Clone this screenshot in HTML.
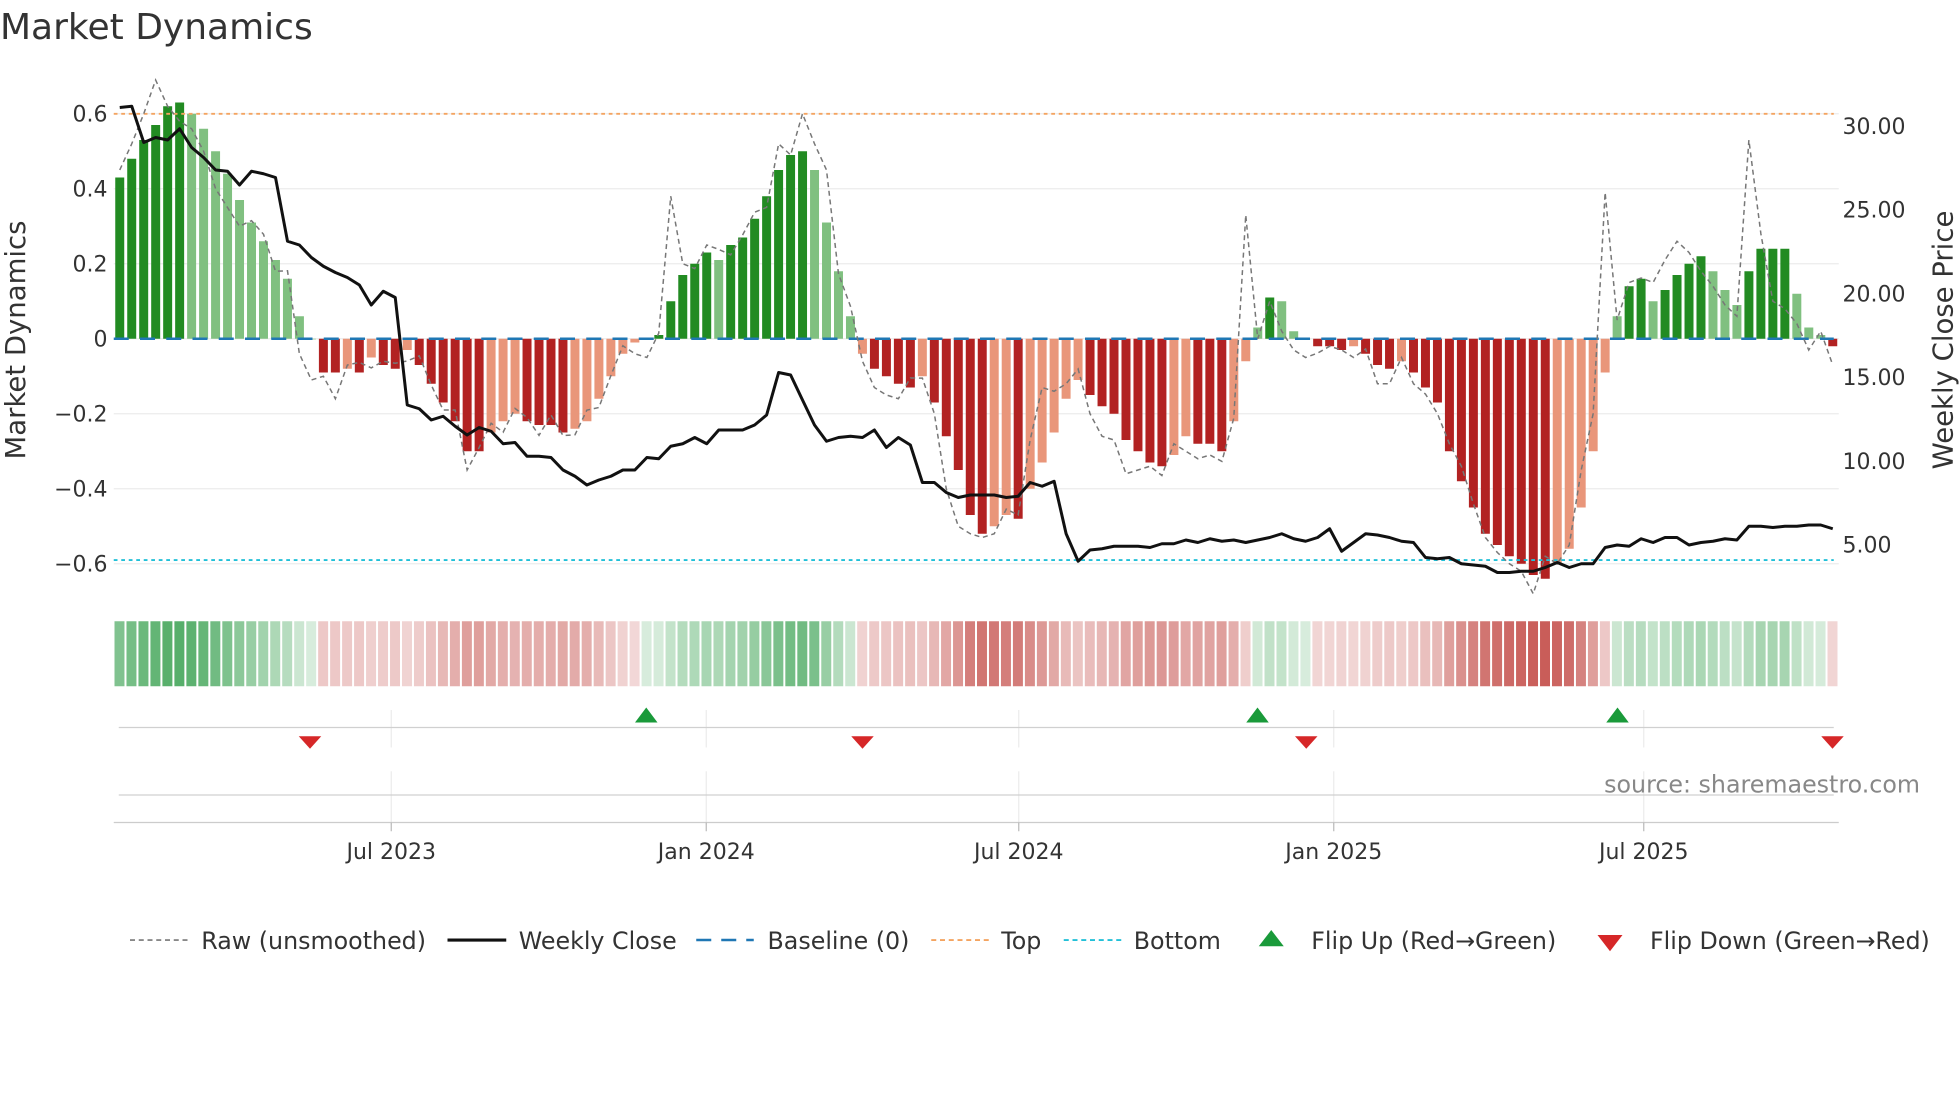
<!DOCTYPE html>
<html><head><meta charset="utf-8"><style>
html,body{margin:0;padding:0;background:#fff;}
svg{display:block;font-family:"DejaVu Sans","Liberation Sans",sans-serif;}
</style></head><body>
<svg id="s" width="1960" height="1102" viewBox="0 0 1568 881.6" xmlns="http://www.w3.org/2000/svg">
<rect width="1568" height="882" fill="#fff"/>
<text x="0" y="31" font-size="28.8" fill="#333">Market Dynamics</text>
<g id="grid" stroke="#ececec" stroke-width="1"></g>
<g id="bars"></g>
<g id="strip"></g>
<g id="lines"></g>
<g font-size="17.6" fill="#333">
<text x="86" y="97" text-anchor="end">0.6</text>
<text x="86" y="157" text-anchor="end">0.4</text>
<text x="86" y="217" text-anchor="end">0.2</text>
<text x="86" y="277" text-anchor="end">0</text>
<text x="86" y="337" text-anchor="end">−0.2</text>
<text x="86" y="397" text-anchor="end">−0.4</text>
<text x="86" y="457" text-anchor="end">−0.6</text>
<text x="1474" y="107">30.00</text>
<text x="1474" y="174">25.00</text>
<text x="1474" y="241">20.00</text>
<text x="1474" y="308">15.00</text>
<text x="1474" y="375">10.00</text>
<text x="1474" y="442">5.00</text>
<text x="313" y="687" text-anchor="middle">Jul 2023</text>
<text x="565" y="687" text-anchor="middle">Jan 2024</text>
<text x="815" y="687" text-anchor="middle">Jul 2024</text>
<text x="1067" y="687" text-anchor="middle">Jan 2025</text>
<text x="1315" y="687" text-anchor="middle">Jul 2025</text>
</g>
<text transform="translate(20,272) rotate(-90)" font-size="22" fill="#333" text-anchor="middle">Market Dynamics</text>
<text transform="translate(1562,272) rotate(-90)" font-size="22" fill="#333" text-anchor="middle">Weekly Close Price</text>
<text x="1536" y="634" font-size="19" fill="#888" text-anchor="end">source: sharemaestro.com</text>
<g font-size="19" fill="#333">
<line x1="104" y1="752" x2="150" y2="752" stroke="#777" stroke-width="1.3" stroke-dasharray="4,3"/>
<text x="161" y="759">Raw (unsmoothed)</text>
<line x1="358" y1="752" x2="405" y2="752" stroke="#111" stroke-width="2.5"/>
<text x="415" y="759">Weekly Close</text>
<line x1="557" y1="752" x2="603" y2="752" stroke="#1f77b4" stroke-width="2" stroke-dasharray="12,8"/>
<text x="614" y="759">Baseline (0)</text>
<line x1="745" y1="752" x2="792" y2="752" stroke="#f4a460" stroke-width="1.5" stroke-dasharray="4,3"/>
<text x="801" y="759">Top</text>
<line x1="851" y1="752" x2="897" y2="752" stroke="#22c0d8" stroke-width="1.5" stroke-dasharray="4,3"/>
<text x="907" y="759">Bottom</text>
<polygon points="1017,744 1027,757 1007,757" fill="#1a9a3a"/>
<text x="1049" y="759">Flip Up (Red→Green)</text>
<polygon points="1278,748 1298,748 1288,761" fill="#d62728"/>
<text x="1320" y="759">Flip Down (Green→Red)</text>
</g>
</svg>
<script>
var NS="http://www.w3.org/2000/svg";
function el(p,t,a){var e=document.createElementNS(NS,t);for(var k in a)e.setAttribute(k,a[k]);document.getElementById(p).appendChild(e);return e;}
var v=[0.43,0.48,0.53,0.57,0.62,0.63,0.6,0.56,0.5,0.44,0.37,0.31,0.26,0.21,0.16,0.06,0.0,-0.09,-0.09,-0.08,-0.09,-0.05,-0.07,-0.08,-0.03,-0.07,-0.12,-0.17,-0.22,-0.3,-0.3,-0.25,-0.22,-0.2,-0.22,-0.23,-0.23,-0.25,-0.24,-0.22,-0.16,-0.1,-0.04,-0.01,0.0,0.01,0.1,0.17,0.2,0.23,0.21,0.25,0.27,0.32,0.38,0.45,0.49,0.5,0.45,0.31,0.18,0.06,-0.04,-0.08,-0.1,-0.12,-0.13,-0.1,-0.17,-0.26,-0.35,-0.47,-0.52,-0.5,-0.47,-0.48,-0.4,-0.33,-0.25,-0.16,-0.11,-0.15,-0.18,-0.2,-0.27,-0.3,-0.33,-0.34,-0.31,-0.26,-0.28,-0.28,-0.3,-0.22,-0.06,0.03,0.11,0.1,0.02,0.0,-0.02,-0.02,-0.03,-0.02,-0.04,-0.07,-0.08,-0.06,-0.09,-0.13,-0.17,-0.3,-0.38,-0.45,-0.52,-0.55,-0.58,-0.6,-0.63,-0.64,-0.6,-0.56,-0.45,-0.3,-0.09,0.06,0.14,0.16,0.1,0.13,0.17,0.2,0.22,0.18,0.13,0.09,0.18,0.24,0.24,0.24,0.12,0.03,0.01,-0.02];
var step=1380/144,x0=91;
function Y(val){return 271-val*300;}
[91,151,211,271,331,391,451].forEach(function(y){el('grid','line',{x1:91,x2:1471,y1:y,y2:y});});
[313,565,815,1067,1315].forEach(function(x){el('grid','line',{x1:x,x2:x,y1:568,y2:598});el('grid','line',{x1:x,x2:x,y1:617,y2:660});});
el('grid','line',{x1:95,x2:1467,y1:582,y2:582,stroke:'#d0d0d0'});
el('grid','line',{x1:95,x2:1467,y1:636,y2:636,stroke:'#d0d0d0'});
el('grid','line',{x1:91,x2:1471,y1:658,y2:658,stroke:'#ccc'});
[313,565,815,1067,1315].forEach(function(x){el('grid','line',{x1:x,x2:x,y1:658,y2:665,stroke:'#bbb'});});
for(var i=0;i<v.length;i++){
 var x=x0+i*step, prev=i>0?v[i-1]:0, val=v[i];
 var strong=Math.abs(val)>=Math.abs(prev)-0.001;
 var c=val>=0?(strong?'#228b22':'#80c080'):(strong?'#b22222':'#e9967a');
 var y1=Y(Math.max(val,0)),y2=Y(Math.min(val,0));
 el('bars','rect',{x:x+1.2,y:y1,width:step-2.4,height:Math.max(y2-y1,0.5),fill:c});
 var a=0.18+Math.min(Math.abs(val)/0.65,1)*0.6;
 el('strip','rect',{x:x+0.6,y:497,width:step-1.6,height:52,fill:val>=0?'rgba(34,150,60,'+a+')':'rgba(185,45,40,'+a+')'});
}
el('lines','line',{x1:91,x2:1467,y1:91,y2:91,stroke:'#f4a460','stroke-width':1.5,'stroke-dasharray':'3,3'});
el('lines','line',{x1:91,x2:1467,y1:448,y2:448,stroke:'#22c0d8','stroke-width':1.5,'stroke-dasharray':'3,3'});
el('lines','line',{x1:91,x2:1467,y1:271,y2:271,stroke:'#1f77b4','stroke-width':2,'stroke-dasharray':'12,9'});
var ov={3:0.69,4:0.62,15:-0.04,16:-0.11,17:-0.1,18:-0.16,19:-0.07,29:-0.35,30:-0.29,44:-0.05,46:0.38,47:0.2,49:0.25,55:0.52,57:0.6,58:0.52,59:0.45,62:-0.06,63:-0.13,64:-0.15,65:-0.16,68:-0.2,69:-0.4,70:-0.5,71:-0.52,72:-0.53,73:-0.52,75:-0.47,76:-0.27,77:-0.13,78:-0.14,79:-0.12,81:-0.2,82:-0.26,83:-0.27,84:-0.36,85:-0.35,86:-0.34,88:-0.28,89:-0.3,90:-0.32,91:-0.31,94:0.33,95:0.0,96:0.1,97:0.02,98:-0.03,99:-0.05,101:-0.02,102:-0.03,103:-0.05,105:-0.12,106:-0.12,107:-0.05,108:-0.12,110:-0.2,111:-0.28,112:-0.34,113:-0.44,114:-0.53,115:-0.57,116:-0.6,117:-0.62,118:-0.68,119:-0.58,120:-0.6,121:-0.55,122:-0.35,123:-0.2,124:0.39,125:0.05,126:0.15,128:0.15,129:0.21,130:0.26,131:0.23,132:0.18,133:0.14,134:0.09,135:0.06,136:0.53,137:0.28,138:0.1,139:0.08,140:0.04,141:-0.03,142:0.02,143:-0.07,0:0.45,1:0.52,2:0.6,5:0.58,6:0.56,7:0.5,8:0.4,9:0.35,10:0.3};
var p='';for(i=0;i<v.length;i++){var r=(ov[i]!==undefined)?ov[i]:v[i]+Math.sin(i*2.3)*0.03;p+=(i?'L':'M')+(x0+i*step+step/2).toFixed(1)+','+Y(r).toFixed(1);}
el('lines','path',{d:p,fill:'none',stroke:'#777','stroke-width':1.2,'stroke-dasharray':'4,3'});
var bl=[86,85,114,110,112,103,118,126,136,137,148,137,139,142,193,196,206,213,218,222,228,244,233,238,324,327,336,333,341,348,342,345,355,354,365,365,366,376,381,388,384,381,376,376,366,367,357,355,350,355,344,344,344,340,332,298,300,320,340,353,350,349,350,344,358,350,356,386,386,394,398,396,396,396,398,397,386,389,385,427,449,440,439,437,437,437,438,435,435,432,434,431,433,432,434,432,430,427,431,433,430,423,441,434,427,428,430,433,434,446,447,446,451,452,453,458,458,457,457,454,450,454,451,451,438,436,437,431,434,430,430,436,434,433,431,432,421,421,422,421,421,420,420,423];
p='';for(i=0;i<bl.length;i++)p+=(i?'L':'M')+(x0+i*step+step/2).toFixed(1)+','+bl[i];
el('lines','path',{d:p,fill:'none',stroke:'#111','stroke-width':2.4,'stroke-linejoin':'round'});
[517,1006,1294].forEach(function(x){el('lines','polygon',{points:(x)+',566 '+(x+9)+',578 '+(x-9)+',578',fill:'#1a9a3a'});});
[248,690,1045,1466].forEach(function(x){el('lines','polygon',{points:(x-9)+',589 '+(x+9)+',589 '+x+',599',fill:'#d62728'});});
</script>
</body></html>
